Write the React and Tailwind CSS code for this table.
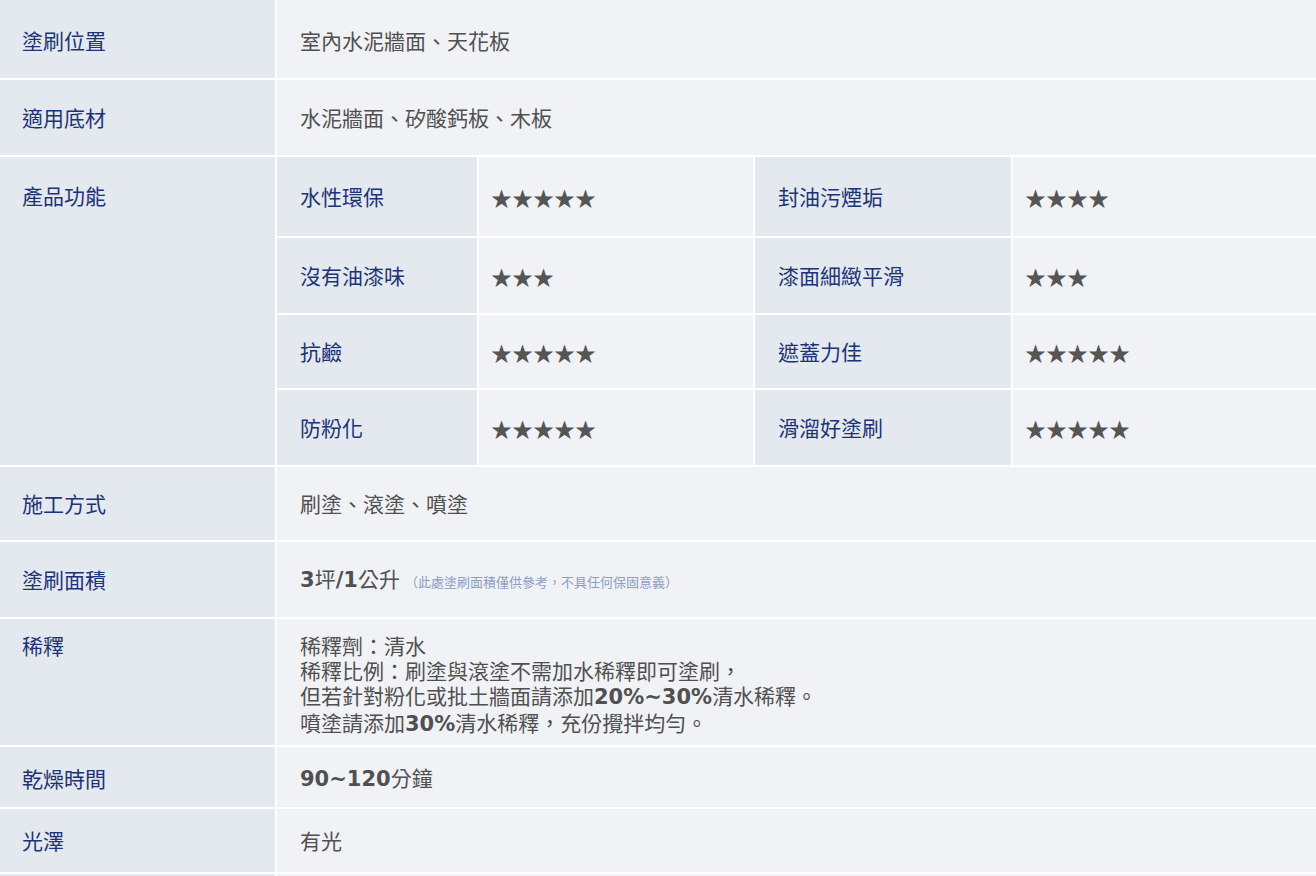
import React from 'react'

const cjk = { fontFamily: '"Noto Sans CJK TC", "Noto Sans", sans-serif' }

function Num({ children }) {
  return <span className="font-bold" style={{ fontFamily: '"DejaVu Sans", sans-serif' }}>{children}</span>
}

function Label({ children, top = false, pt = '' }) {
  return (
    <div className={`bg-[#e4e8ef] pl-[22px] text-[#1c3475] flex ${top ? 'items-start' : 'items-center'} ${pt}`}>
      <span className="leading-[25px]">{children}</span>
    </div>
  )
}

function Value({ children, top = false, pt = '' }) {
  return (
    <div className={`bg-[#f0f2f6] pl-[23px] text-[#505050] flex ${top ? 'items-start' : 'items-center'} ${pt}`}>
      <div className="leading-[25px]">{children}</div>
    </div>
  )
}

const features = [
  ['水性環保', 5, '封油污煙垢', 4, 'h-[79px]'],
  ['沒有油漆味', 3, '漆面細緻平滑', 3, 'h-[75px]'],
  ['抗鹼', 5, '遮蓋力佳', 5, 'h-[73px]'],
  ['防粉化', 5, '滑溜好塗刷', 5, 'h-[75px]'],
]

function Stars({ n }) {
  return (
    <div className="bg-[#f0f2f6] pl-[12px] pt-[2px] flex items-center text-[#555] text-[21px]">
      {'★'.repeat(n)}
    </div>
  )
}

function FeatureTable() {
  return (
    <div className="grid grid-cols-[200px_274px_256px_1fr] gap-[2px] bg-white">
      {features.map(([a, na, b, nb, h]) => (
        <React.Fragment key={a}>
          <div className={`${h} bg-[#e4e8ef] pl-[23px] flex items-center text-[#1c3475]`}>{a}</div>
          <Stars n={na} />
          <div className={`${h} bg-[#e4e8ef] pl-[23px] flex items-center text-[#1c3475]`}>{b}</div>
          <Stars n={nb} />
        </React.Fragment>
      ))}
    </div>
  )
}

export default function App() {
  return (
    <div className="w-[1316px] h-[876px] overflow-hidden bg-white text-[21px]" style={cjk}>
      <div className="grid grid-cols-[275px_1fr] gap-[2px] bg-white">
        <Label pt="h-[78px] pt-[2px]">塗刷位置</Label>
        <Value pt="h-[78px] pt-[2px]">室內水泥牆面、天花板</Value>

        <Label pt="h-[75px]">適用底材</Label>
        <Value pt="h-[75px]">水泥牆面、矽酸鈣板、木板</Value>

        <Label top pt="h-[308px] pt-[26px]">產品功能</Label>
        <div className="bg-[#f0f2f6]">
          <FeatureTable />
        </div>

        <Label pt="h-[73px]">施工方式</Label>
        <Value pt="h-[73px]">刷塗、滾塗、噴塗</Value>

        <Label pt="h-[75px]">塗刷面積</Label>
        <Value pt="h-[75px]">
          <Num>3</Num>坪<Num>/1</Num>公升
          <span className="ml-[5px] text-[13px] text-[#8d9ec2] align-baseline">（此處塗刷面積僅供參考，不具任何保固意義）</span>
        </Value>

        <Label top pt="h-[126px] pt-[14px]">稀釋</Label>
        <Value top pt="h-[126px] pt-[14px]">
          <div>稀釋劑：清水</div>
          <div>稀釋比例：刷塗與滾塗不需加水稀釋即可塗刷，</div>
          <div>但若針對粉化或批土牆面請添加<Num>20%~30%</Num>清水稀釋。</div>
          <div>噴塗請添加<Num>30%</Num>清水稀釋，充份攪拌均勻。</div>
        </Value>

        <Label pt="h-[60px] pt-[2px]">乾燥時間</Label>
        <Value pt="h-[60px] pt-[2px]"><Num>90~120</Num>分鐘</Value>

        <Label pt="h-[63px]">光澤</Label>
        <Value pt="h-[63px]">有光</Value>

        <Label pt="h-[60px]">{''}</Label>
        <Value pt="h-[60px]">{''}</Value>
      </div>
    </div>
  )
}
